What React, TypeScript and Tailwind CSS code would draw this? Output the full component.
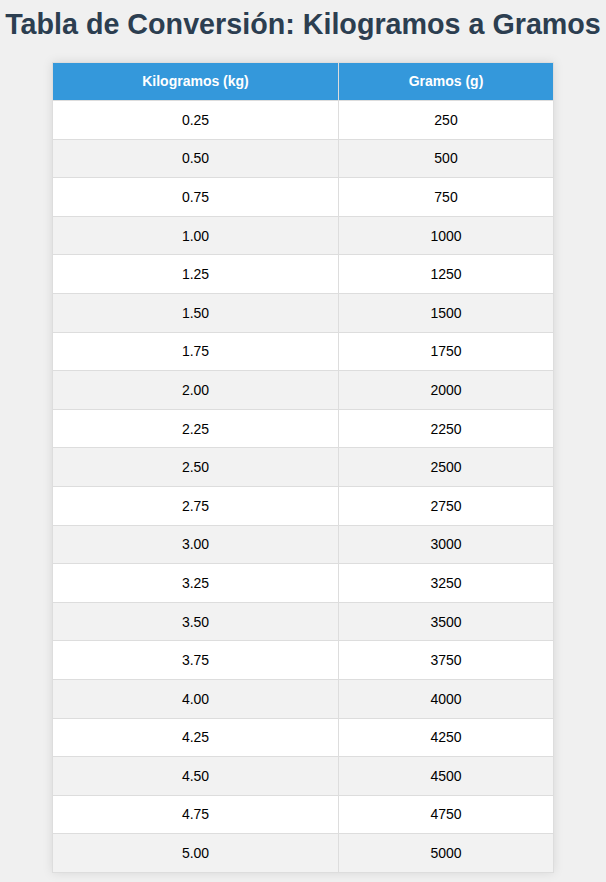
import React from "react";

const rows = Array.from({ length: 20 }, (_, i) => {
  const kg = (i + 1) * 0.25;
  return { kg: kg.toFixed(2), g: String(kg * 1000) };
});

export default function App() {
  return (
    <div className="min-h-[882px] bg-[#f0f0f0] pt-[8px] font-['Liberation_Sans',Arial,sans-serif]">
      <h1 className="text-center text-[28.7px] leading-[32px] font-bold text-[#2c3e50] whitespace-nowrap">
        Tabla de Conversión: Kilogramos a Gramos
      </h1>
      <div className="mx-auto mt-[22px] w-[502px] bg-white shadow-[0_0_10px_rgba(0,0,0,0.1)]">
        <table className="w-full border-collapse text-[14px] text-black">
          <thead>
            <tr className="h-[38px] bg-[#3498db] text-white">
              <th className="w-[286px] border border-[#dddddd] font-bold">Kilogramos (kg)</th>
              <th className="border border-[#dddddd] font-bold">Gramos (g)</th>
            </tr>
          </thead>
          <tbody>
            {rows.map((r, i) => (
              <tr key={r.kg} className={`h-[38.6px] ${i % 2 === 1 ? "bg-[#f2f2f2]" : "bg-white"}`}>
                <td className="border border-[#dddddd] text-center pt-[1px]">{r.kg}</td>
                <td className="border border-[#dddddd] text-center pt-[1px]">{r.g}</td>
              </tr>
            ))}
          </tbody>
        </table>
      </div>
    </div>
  );
}
